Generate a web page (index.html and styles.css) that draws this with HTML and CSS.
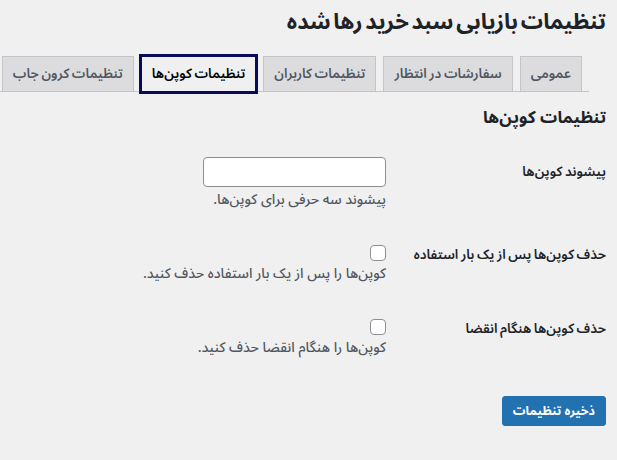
FILE: index.html
```html
<!DOCTYPE html>
<html lang="fa" dir="rtl">
<head>
<meta charset="utf-8">
<title>تنظیمات بازیابی سبد خرید رها شده</title>
<link rel="stylesheet" href="styles.css">
</head>
<body>
<div class="wrap">
  <h1 class="page-title">تنظیمات بازیابی سبد خرید رها شده</h1>
  <nav class="tabs">
    <a class="tab">عمومی</a>
    <a class="tab">سفارشات در انتظار</a>
    <a class="tab">تنظیمات کاربران</a>
    <a class="tab tab-active">تنظیمات کوپن‌ها</a>
    <a class="tab">تنظیمات کرون جاب</a>
    <a class="tab">تنظیمات ایمیل</a>
  </nav>
  <h2 class="section-title">تنظیمات کوپن‌ها</h2>
  <form class="form">
    <div class="row">
      <div class="label">پیشوند کوپن‌ها</div>
      <div class="field">
        <input class="text-input" type="text">
        <p class="desc">پیشوند سه حرفی برای کوپن‌ها.</p>
      </div>
    </div>
    <div class="row">
      <div class="label">حذف کوپن‌ها پس از یک بار استفاده</div>
      <div class="field">
        <input class="check" type="checkbox">
        <p class="desc">کوپن‌ها را پس از یک بار استفاده حذف کنید.</p>
      </div>
    </div>
    <div class="row">
      <div class="label">حذف کوپن‌ها هنگام انقضا</div>
      <div class="field">
        <input class="check" type="checkbox">
        <p class="desc">کوپن‌ها را هنگام انقضا حذف کنید.</p>
      </div>
    </div>
    <div class="actions">
      <button class="btn" type="button">ذخیره تنظیمات</button>
    </div>
  </form>
</div>
</body>
</html>
```

FILE: styles.css
```css
html, body {
  overflow: hidden;
}
body {
  margin: 0;
  background: #f0f0f1;
  color: #1d2327;
  font-family: "Noto Sans Arabic", "Noto Sans", "DejaVu Sans", sans-serif;
  font-size: 14px;
  direction: rtl;
}
.wrap {
  padding: 7px 11px 0 0;
}
.page-title {
  margin: 0;
  font-size: 22px;
  font-weight: 700;
  line-height: 30px;
  word-spacing: -3px;
  color: #1d2327;
}
.tabs {
  display: flex;
  flex-wrap: nowrap;
  gap: 7px;
  margin: 19px 17px 0 0;
  padding-right: 7px;
  border-bottom: 1px solid #c3c4c7;
  height: 35px;
  align-items: flex-end;
}
.tab {
  flex-shrink: 0;
  box-sizing: border-box;
  height: 35px;
  padding: 0 10px;
  line-height: 33px;
  font-size: 13.5px;
  font-weight: 600;
  word-spacing: -1px;
  color: #50575e;
  background: #dcdcde;
  border: 1px solid #c3c4c7;
  border-bottom: none;
  white-space: nowrap;
}
.tab-active {
  height: 36px;
  margin-bottom: -1px;
  background: #f0f0f1;
  color: #000;
  border: 1px solid #0a0a5c;
  box-shadow: 0 0 0 2px #0a0a5c;
}
.section-title {
  margin: 12px 0 0;
  font-size: 17px;
  font-weight: 700;
  line-height: 28px;
}
.form {
  margin-top: 10px;
}
.row {
  display: flex;
}
.label {
  box-sizing: border-box;
  flex: 0 0 210px;
  padding: 20px 0 0 0;
  line-height: 20px;
  font-weight: 600;
  font-size: 13.5px;
  word-spacing: -1px;
  white-space: nowrap;
  color: #1d2327;
}
.field {
  padding: 15px 10px 15px 0;
  display: flex;
  flex-direction: column;
  align-items: flex-start;
}
.text-input {
  box-sizing: border-box;
  width: 183px;
  height: 30px;
  margin: 0;
  background: #fff;
  border: 1px solid #8c8f94;
  border-radius: 4px;
}
.check {
  appearance: none;
  -webkit-appearance: none;
  box-sizing: border-box;
  width: 16px;
  height: 16px;
  margin: 5px 0 0;
  background: #fff;
  border: 1px solid #8c8f94;
  border-radius: 4px;
}
.desc {
  margin: 3px 0 0;
  line-height: 20px;
  font-size: 14px;
  font-weight: 500;
  color: #50575e;
}
.actions {
  margin-top: 23px;
}
.btn {
  height: 30px;
  padding: 0 10px;
  font-family: inherit;
  font-size: 12.5px;
  font-weight: 700;
  color: #fff;
  background: #2271b1;
  border: 1px solid #2271b1;
  border-radius: 3px;
}
```
